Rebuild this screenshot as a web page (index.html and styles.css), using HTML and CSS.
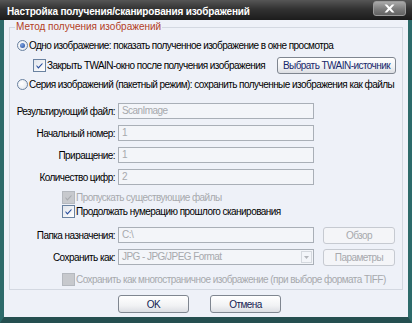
FILE: index.html
```html
<!DOCTYPE HTML>
<html>
<head>
    <meta charset="utf-8">
    <title>Настройка получения/сканирования изображений</title>
    <link rel="stylesheet" href="styles.css">
</head>
<body>
<div class="window">
    <div class="titlebar">
        <span class="title">Настройка получения/сканирования изображений</span>
        <span class="close-btn">
            <svg width="11" height="9" viewBox="0 0 11 9">
                <path d="M0.5,0.5 L3,0.5 L5.5,3 L8,0.5 L10.5,0.5 L7,4.5 L10.5,8.5 L8,8.5 L5.5,6 L3,8.5 L0.5,8.5 L4,4.5 Z"/>
            </svg>
        </span>
    </div>
    <div class="frame">
        <div class="group">
            <div class="legend">Метод получения изображений</div>

            <div class="row row-radio1">
                <span class="radio on"></span>
                <span>Одно изображение: показать полученное изображение в окне просмотра</span>
            </div>

            <div class="row row-close">
                <span class="check">
                    <svg viewBox="0 0 13 13"><path d="M3,6 L5.2,8.4 L10,3.2 L10,5 L5.2,10.3 L3,7.8 Z"/></svg>
                </span>
                <span class="grow">Закрыть TWAIN-окно после получения изображения</span>
                <span class="btn btn-twain">Выбрать TWAIN-источник</span>
            </div>

            <div class="row row-radio2">
                <span class="radio"></span>
                <span>Серия изображений (пакетный режим): сохранить полученные изображения как файлы</span>
            </div>

            <div class="field field-first">
                <span class="lbl">Результирующий файл:</span>
                <span class="input">ScanImage</span>
            </div>
            <div class="field">
                <span class="lbl">Начальный номер:</span>
                <span class="input">1</span>
            </div>
            <div class="field">
                <span class="lbl">Приращение:</span>
                <span class="input">1</span>
            </div>
            <div class="field">
                <span class="lbl">Количество цифр:</span>
                <span class="input">2</span>
            </div>

            <div class="row row-sub row-skip disabled">
                <span class="check off-state">
                    <svg viewBox="0 0 13 13"><path d="M3,6 L5.2,8.4 L10,3.2 L10,5 L5.2,10.3 L3,7.8 Z"/></svg>
                </span>
                <span>Пропускать существующие файлы</span>
            </div>
            <div class="row row-sub">
                <span class="check">
                    <svg viewBox="0 0 13 13"><path d="M3,6 L5.2,8.4 L10,3.2 L10,5 L5.2,10.3 L3,7.8 Z"/></svg>
                </span>
                <span>Продолжать нумерацию прошлого сканирования</span>
            </div>

            <div class="field field-btn field-folder">
                <span class="lbl">Папка назначения:</span>
                <span class="input">C:\</span>
                <span class="btn btn-side">Обзор</span>
            </div>
            <div class="field field-btn">
                <span class="lbl">Сохранить как:</span>
                <span class="input select">
                    <span class="grow">JPG - JPG/JPEG Format</span>
                    <span class="drop">
                        <svg width="5" height="3" viewBox="0 0 5 3"><path d="M0,0 L5,0 L2.5,3 Z"/></svg>
                    </span>
                </span>
                <span class="btn btn-side">Параметры</span>
            </div>

            <div class="row row-sub row-multi disabled">
                <span class="check off-state empty"></span>
                <span>Сохранить как многостраничное изображение (при выборе формата TIFF)</span>
            </div>
        </div>

        <div class="actions">
            <span class="btn btn-main">OK</span>
            <span class="btn btn-main">Отмена</span>
        </div>
    </div>
</div>
</body>
</html>
```

FILE: styles.css
```css
body, html {
    margin: 0;
    padding: 0;
    background-color: #24504f;
    font-family: "Liberation Sans", Arial, sans-serif;
    font-size: 10px;
    letter-spacing: -0.55px;
    color: #000000;
}

.window {
    width: 412px;
    height: 323px;
    display: flex;
    flex-direction: column;
}

/* title bar */

.titlebar {
    height: 20px;
    flex: none;
    display: flex;
    background: linear-gradient(#565656, #323232 45%, #1c1c1c);
    color: #ffffff;
}

.title {
    flex: 1;
    padding: 5px 0 0 7px;
    font-weight: bold;
    font-size: 10px;
    letter-spacing: -0.15px;
    line-height: 13px;
    white-space: nowrap;
}

.close-btn {
    width: 31px;
    height: 13px;
    margin: 1px 6px 0 0;
    border: 1px solid #9a9a9a;
    border-radius: 3px;
    background: linear-gradient(#a9a9a9, #7b7b7b 55%, #626262);
    display: flex;
    align-items: center;
    justify-content: center;
}

.close-btn svg {
    fill: #ffffff;
}

/* client area */

.frame {
    flex: 1;
    display: flex;
    flex-direction: column;
    background-color: #eef1f8;
    border-left: 4px solid #2d6a6a;
    border-right: 4px solid #2d6a6a;
    border-bottom: 6px solid #254f50;
}

.group {
    margin: 7px 5px 0 5px;
    padding-bottom: 3px;
    border: 1px solid #d3d8e1;
    display: flex;
    flex-direction: column;
}

.legend {
    align-self: flex-start;
    margin: -8px 0 0 5px;
    padding: 0 1px;
    height: 14px;
    line-height: 14px;
    letter-spacing: 0;
    color: #b3401f;
    background-color: #eef1f8;
}

.row {
    display: flex;
    align-items: center;
    white-space: nowrap;
}

.row-radio1 {
    height: 16px;
    margin-top: 3px;
    padding-left: 7px;
}

.row-close {
    height: 18px;
    margin-top: 3px;
    padding-left: 23px;
}

.row-radio2 {
    height: 16px;
    margin-top: 2px;
    padding-left: 7px;
}

.row-sub {
    height: 14px;
    padding-left: 52px;
}

.row-skip {
    margin-top: 5px;
}

.row-multi {
    margin-top: 6px;
}

.disabled {
    color: #a7a9ad;
}

.grow {
    flex: 1;
}

/* radio and check boxes */

.radio {
    width: 11px;
    height: 11px;
    box-sizing: border-box;
    margin-right: 1px;
    border: 1px solid #6a82a0;
    border-radius: 50%;
    background: radial-gradient(circle at 40% 40%, #ffffff, #dde3ec);
    display: flex;
    align-items: center;
    justify-content: center;
}

.radio.on::after {
    content: "";
    width: 5px;
    height: 5px;
    border-radius: 50%;
    background: radial-gradient(circle at 35% 35%, #7ea3e0, #1f4a9c);
}

.check {
    width: 13px;
    height: 13px;
    box-sizing: border-box;
    margin-right: 1px;
    border: 1px solid #6a82a0;
    background: linear-gradient(135deg, #e1e5ec, #ffffff);
    display: flex;
}

.check svg {
    width: 11px;
    height: 11px;
    fill: #2a4f9e;
}

.check.off-state {
    border-color: #b4b8be;
    background: #c7c9cd;
}

.check.off-state svg {
    fill: #a9abaf;
}

/* edit fields */

.field {
    display: flex;
    align-items: center;
    height: 16px;
    margin-top: 6px;
    white-space: nowrap;
}

.field-first {
    margin-top: 11px;
}

.field-btn {
    height: 18px;
    margin-top: 4px;
}

.field-folder {
    margin-top: 8px;
}

.lbl {
    width: 105px;
    margin-right: 3px;
    text-align: right;
}

.input {
    width: 196px;
    height: 16px;
    box-sizing: border-box;
    padding-left: 3px;
    border: 1px solid #a9afb7;
    background-color: #f3f5f9;
    color: #a7a9ad;
    line-height: 14px;
    display: flex;
}

.input.select {
    padding-right: 1px;
    align-items: center;
}

.drop {
    width: 11px;
    height: 12px;
    box-sizing: border-box;
    border: 1px solid #d4d8de;
    display: flex;
    align-items: center;
    justify-content: center;
}

.drop svg {
    fill: #b3b6bb;
}

/* buttons */

.btn {
    height: 17px;
    box-sizing: border-box;
    border: 1px solid #7f8690;
    border-radius: 3px;
    background: linear-gradient(#ffffff, #f1f2f4 60%, #dcdee3);
    color: #17296b;
    display: flex;
    align-items: center;
    justify-content: center;
}

.btn-twain {
    width: 119px;
    margin-right: 6px;
}

.btn-side {
    width: 72px;
    margin-left: 9px;
    border-color: #c6cad1;
    background: #f4f5f8;
    color: #a7a9ad;
}

.actions {
    display: flex;
    gap: 21px;
    margin-top: 5px;
    padding-left: 114px;
}

.btn-main {
    width: 71px;
    height: 18px;
    color: #141c52;
}
```
